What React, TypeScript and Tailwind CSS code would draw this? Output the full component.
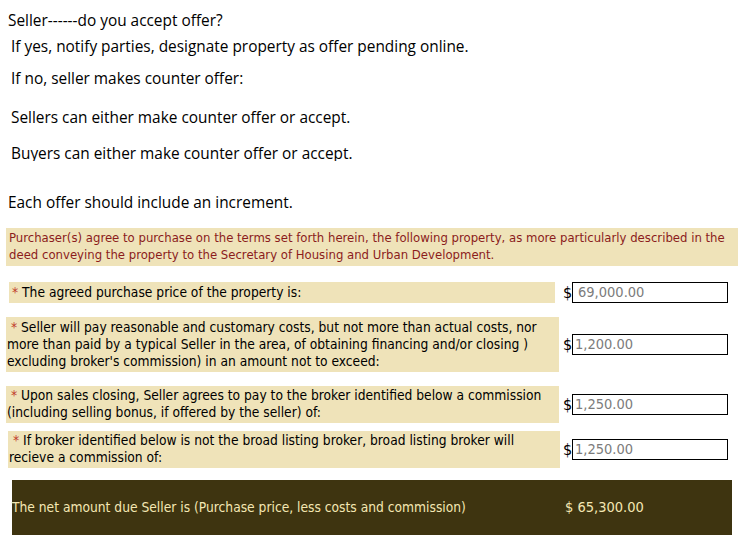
import { useState } from "react";

const ROWS = [
  {
    text: "The agreed purchase price of the property is:",
    value: "69,000.00",
    box: "ml-[9px] w-[546px] h-[21px] items-center pl-[3px]",
    wrap: "mt-[16px] h-[21px]",
    lead: "",
    pad: "pl-[5px]",
  },
  {
    text: "Seller will pay reasonable and customary costs, but not more than actual costs, nor more than paid by a typical Seller in the area, of obtaining financing and/or closing ) excluding broker's commission) in an amount not to exceed:",
    value: "1,200.00",
    box: "ml-[6px] w-[553px] h-[55px] pt-[2px] pl-[1px]",
    wrap: "mt-[14px] h-[55px]",
    lead: "\u00a0",
    pad: "pl-[2px]",
  },
  {
    text: "Upon sales closing, Seller agrees to pay to the broker identified below a commission (including selling bonus, if offered by the seller) of:",
    value: "1,250.00",
    box: "ml-[6px] w-[553px] h-[37px] pt-[1px] pl-[1px]",
    wrap: "mt-[14px] h-[37px]",
    lead: "\u00a0",
    pad: "pl-[2px]",
  },
  {
    text: "If broker identified below is not the broad listing broker, broad listing broker will recieve a commission of:",
    value: "1,250.00",
    box: "ml-[8px] w-[552px] h-[37px] pt-[1px] pl-[1px]",
    wrap: "mt-[8px] h-[37px]",
    lead: "\u00a0",
    pad: "pl-[2px]",
  },
];

const formFont = "font-['DejaVu_Sans_Condensed','DejaVu_Sans',sans-serif]";

export default function App() {
  const [values, setValues] = useState(ROWS.map((r) => r.value));

  return (
    <div className="h-[550px] w-[749px] overflow-hidden bg-white text-black">
      <div className="font-['Open_Sans',sans-serif] text-[15.4px] leading-[20px]">
        <p className="ml-[8px] mt-[11px]">Seller------do you accept offer?</p>
        <p className="ml-[11px] mt-[6px]">
          If yes, notify parties, designate property as offer pending online.
        </p>
        <p className="ml-[11px] mt-[12px]">If no, seller makes counter offer:</p>
        <p className="ml-[11px] mt-[19px]">
          Sellers can either make counter offer or accept.
        </p>
        <p className="ml-[11px] mt-[16px] h-[17px] overflow-hidden">
          Buyers can either make counter offer or accept.
        </p>
        <p className="ml-[8px] mt-[32px]">Each offer should include an increment.</p>
      </div>

      <div className={formFont}>
        <div className="ml-[6px] mt-[15px] w-[732px] bg-[#efe3b9] px-[3px] pt-[1px] pb-[3px] text-[13px] leading-[17px] text-[#8b1c1c]">
          Purchaser(s) agree to purchase on the terms set forth herein, the
          following property, as more particularly described in the deed
          conveying the property to the Secretary of Housing and Urban
          Development.
        </div>

        {ROWS.map((row, i) => (
          <div key={i} className={`flex items-center ${row.wrap}`}>
            <div
              className={`flex shrink-0 self-stretch bg-[#efe3b9] pr-[4px] text-[13.7px] leading-[17px] ${row.box}`}
            >
              <p>
                {row.lead}
                <span className="text-[#c0392b]">*</span> {row.text}
              </p>
            </div>
            <div className="ml-auto mr-[21px] flex items-center">
              <span className="w-[9px] text-[16px] leading-[20px]">$</span>
              <input
                value={values[i]}
                onChange={(e) => {
                  const next = [...values];
                  next[i] = e.target.value;
                  setValues(next);
                }}
                className={`h-[21px] w-[156px] border border-black pr-[3px] text-[14.5px] text-[#7c7c7c] outline-none ${row.pad}`}
              />
            </div>
          </div>
        ))}

        <div className="ml-[12px] mt-[12px] flex h-[55px] w-[720px] items-center bg-[#3e3410] text-[13.7px] text-[#f4e7b3]">
          <span className="w-[553px]">
            The net amount due Seller is (Purchase price, less costs and
            commission)
          </span>
          <span className="text-[14.5px]">$ 65,300.00</span>
        </div>
      </div>
    </div>
  );
}
